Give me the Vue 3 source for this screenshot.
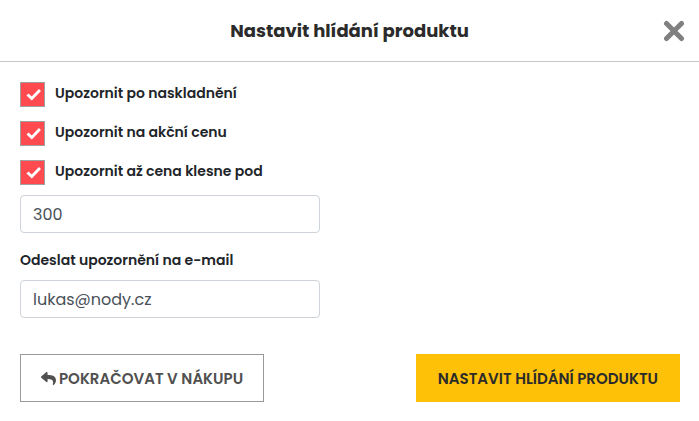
<template>
  <div class="dialog" role="dialog" aria-labelledby="dialog-title">
    <header class="dialog-header">
      <h1 id="dialog-title">Nastavit hlídání produktu</h1>
      <button class="close" type="button" aria-label="Zavřít">
        <svg viewBox="0 0 22 22" width="22" height="22">
          <path d="M3.5 3.5 18.5 18.5M18.5 3.5 3.5 18.5" />
        </svg>
      </button>
    </header>

    <form class="dialog-body" @submit.prevent>
      <div class="options">
        <label v-for="item in options" :key="item.id" class="option">
          <input v-model="item.checked" type="checkbox" />
          <span class="box">
            <svg v-if="item.checked" viewBox="0 0 15 13" width="15" height="13">
              <path d="M1.500 6.500 5.800 10.500 14 2" />
            </svg>
          </span>
          <span>{{ item.label }}</span>
        </label>
      </div>
      <input
        v-model="price"
        class="field"
        type="text"
        inputmode="numeric"
        aria-label="Upozornit až cena klesne pod"
      />

      <label class="field-label" for="email">Odeslat upozornění na e-mail</label>
      <input id="email" v-model="email" class="field" type="email" />

      <div class="actions">
        <button class="btn btn-back" type="button">
          <svg viewBox="0 0 512 512" width="15" height="15">
            <path
              d="M8.3 189.8 184.3 37.900c15.400-13.300 39.700-2.500 39.700 18.100v80.100c160.600 1.800 288 34 288 186.300 0 61.400-39.600 122.300-83.300 154.100-13.700 9.900-33.100-2.500-28.100-18.600 45.300-145-21.500-183.500-176.600-185.700v87.900c0 20.700-24.300 31.500-39.700 18.200l-176-152c-11.100-9.600-11.100-26.800 0-36.500z"
            />
          </svg>
          Pokračovat v nákupu
        </button>
        <button class="btn btn-submit" type="submit">Nastavit hlídání produktu</button>
      </div>
    </form>
  </div>
</template>

<script setup>
import { ref } from "vue";

const options = ref([
  { id: "stock", label: "Upozornit po naskladnění", checked: true },
  { id: "sale", label: "Upozornit na akční cenu", checked: true },
  { id: "price", label: "Upozornit až cena klesne pod", checked: true },
]);

const price = ref("300");
const email = ref("lukas@nody.cz");
</script>

<style>
body {
  background: #fff;
}
</style>

<style scoped>
.dialog {
  font-family: Poppins, Inter, "Open Sans", sans-serif;
  color: #212529;
}

.dialog-header {
  display: grid;
  grid-template-columns: 40px 1fr 40px;
  align-items: center;
  height: 61px;
  padding: 0 5px;
  border-bottom: 1px solid #c8c8c8;
}

h1 {
  grid-column: 2;
  margin: 0;
  font-size: 18px;
  font-weight: 700;
  line-height: 28px;
  text-align: center;
  color: #2b2b2b;
}

.close {
  display: flex;
  align-items: center;
  justify-content: center;
  padding: 0;
  height: 40px;
  border: 0;
  background: none;
  cursor: pointer;
}

.close path {
  fill: none;
  stroke: #808080;
  stroke-width: 5;
  stroke-linecap: round;
}

.dialog-body {
  padding: 20px 19px 20px 20px;
}

.options {
  display: flex;
  flex-direction: column;
  align-items: flex-start;
  gap: 14px;
  margin-bottom: 10px;
}

.option {
  position: relative;
  display: flex;
  gap: 10px;
  font-size: 14px;
  font-weight: 600;
  line-height: 22px;
  cursor: pointer;
}

.option input {
  position: absolute;
  width: 25px;
  height: 25px;
  margin: 0;
  opacity: 0;
}

.box {
  display: flex;
  align-items: center;
  justify-content: center;
  box-sizing: border-box;
  width: 25px;
  height: 25px;
  padding-left: 1px;
  border: 1px solid #a0a0a0;
}

.option input:checked + .box {
  background: #ff4b50;
}

.box path {
  fill: none;
  stroke: #fff;
  stroke-width: 3;
}

.field {
  display: block;
  box-sizing: border-box;
  width: 100%;
  max-width: 300px;
  height: 38px;
  padding: 6px 12px;
  border: 1px solid #ced4da;
  border-radius: 4px;
  font-family: inherit;
  font-size: 16px;
  color: #495057;
  background: #fff;
}

.field-label {
  display: block;
  margin: 17px 0 9px;
  font-size: 14px;
  font-weight: 600;
  line-height: 21px;
}

.actions {
  display: flex;
  justify-content: space-between;
  gap: 20px;
  margin-top: 36px;
}

.btn {
  display: flex;
  align-items: center;
  justify-content: center;
  gap: 3px;
  box-sizing: border-box;
  height: 48px;
  padding: 0 21px;
  border: 1px solid #999;
  font-family: inherit;
  font-size: 15px;
  font-weight: 600;
  text-transform: uppercase;
  white-space: nowrap;
  cursor: pointer;
}

.btn-back {
  padding: 0 20px;
  color: #505050;
  background: #fff;
}

.btn-back svg {
  fill: currentColor;
}

.btn-submit {
  border-color: #ffc107;
  color: #2b2b2b;
  background: #ffc107;
}
</style>
